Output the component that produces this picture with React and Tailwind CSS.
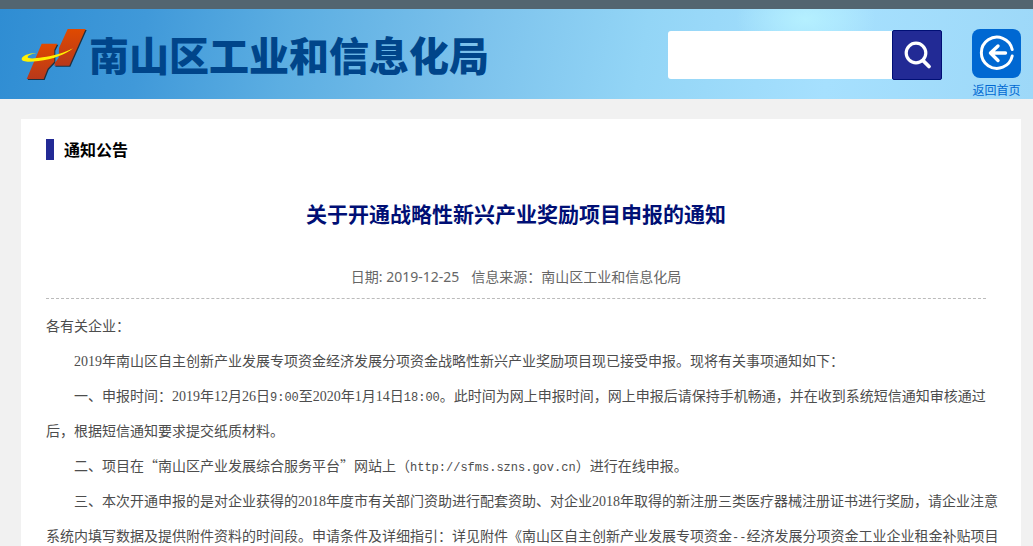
import React from 'react';

const cjk = "font-['Noto_Sans_CJK_SC',sans-serif]";

function Num({ children }) {
  return <span className="leading-none font-['Liberation_Serif',serif]">{children}</span>;
}

function Code({ children }) {
  return <span className="text-[12px] leading-none font-['Liberation_Mono',monospace]">{children}</span>;
}

function Emblem() {
  return (
    <svg className="w-[67px] h-[53px] shrink-0" viewBox="15 24 201 159" aria-hidden="true">
      <defs>
        <linearGradient id="emblemRed" x1="0" y1="0" x2="0" y2="1">
          <stop offset="0" stopColor="#e04a00" />
          <stop offset="1" stopColor="#b8381b" />
        </linearGradient>
      </defs>
      <g fill="#1d3040" transform="translate(3 3)">
        <path d="M80 71H127L118 89V125L98 146L86 177H35Z" />
        <path d="M158 27H212L163 137H118L120 128L131 113L132 84Z" />
      </g>
      <path fill="url(#emblemRed)" d="M80 71H127L118 89V125L98 146L86 177H35Z" />
      <path fill="url(#emblemRed)" d="M158 27H212L163 137H118L120 128L131 113L132 84Z" />
      <path
        fill="#fff200"
        d="M64 99C40 100 21 107 20 117C20 127 46 126 70 123C112 119 154 103 174 85C151 98 113 108 83 112C59 116 38 117 38 111C39 106 50 102 64 99Z"
      />
    </svg>
  );
}

function SearchIcon() {
  return (
    <svg className="w-[30px] h-[30px]" viewBox="0 0 30 30" fill="none" stroke="#fff" strokeLinecap="round" aria-hidden="true">
      <circle cx="14" cy="13" r="9.8" strokeWidth="3.2" />
      <path d="M21 20.5L27 26.5" strokeWidth="3.8" />
    </svg>
  );
}

function BackIcon() {
  return (
    <svg className="w-[49px] h-[49px]" viewBox="0 0 49 49" fill="none" stroke="#fff" strokeLinecap="round" strokeLinejoin="round" aria-hidden="true">
      <path d="M40.2 20.5A15.6 15.6 0 1 0 40.2 27" strokeWidth="3" />
      <path d="M33.5 24H18.5M26 17L18.5 24L26 31.5" strokeWidth="3.4" />
    </svg>
  );
}

function Header() {
  return (
    <header>
      <div className="h-[9px] bg-[#536570]"></div>
      <div className="h-[90px] bg-[radial-gradient(ellipse_70px_40px_at_78%_10px,#b5f0ff,transparent),linear-gradient(100deg,#2f8dd3_0%,#4099d9_14%,#5caee2_28%,#7cc2ec_46%,#93d5f6_62%,#a6e0fe_80%,#9dd8f8_100%)]">
        <div className="flex items-start justify-between pl-[20px] pr-3">
          <a href="#" className="flex items-center gap-[2px] pt-[19px] text-[#00458a]">
            <Emblem />
            <span className="text-[40px] leading-[53px] font-black whitespace-nowrap">南山区工业和信息化局</span>
          </a>

          <div className="flex items-start gap-[30px] pt-[20px]">
            <form className="flex items-center" onSubmit={(e) => e.preventDefault()}>
              <input type="text" aria-label="搜索" className="w-56 h-12 px-3 rounded-l-[3px] bg-white outline-none" />
              <button type="submit" aria-label="搜索" className="flex items-center justify-center w-[50px] h-[50px] mt-px rounded-[2px] border border-[#000f75] bg-[#222a95]">
                <SearchIcon />
              </button>
            </form>
            <a href="#" className="flex flex-col items-center text-[12px] leading-6 text-[#0068d2]">
              <span className="rounded-lg bg-[#0068d2]">
                <BackIcon />
              </span>
              返回首页
            </a>
          </div>
        </div>
      </div>
    </header>
  );
}

function App() {
  return (
    <div className={`h-screen overflow-hidden bg-[#f1f1f1] ${cjk}`}>
      <Header />

      <main className="mt-5 ml-[21px] mr-3 min-h-full bg-white pl-[25px] pt-5">
        <div className="flex items-center gap-[10px]">
          <span className="w-2 h-[21px] bg-[#222a95]"></span>
          <h2 className="text-[16px] leading-[21px] font-bold text-black">通知公告</h2>
        </div>

        <div className="mr-[35px] text-center border-b border-dashed border-[#bbb]">
          <h1 className="pt-[38px] text-[21px] leading-[30px] font-bold text-[#000f75]">关于开通战略性新兴产业奖励项目申报的通知</h1>
          <p className="flex justify-center gap-3 pt-[38px] pb-[10px] text-[14px] leading-[22px] text-[#666] font-['Noto_Sans','Noto_Sans_CJK_SC',sans-serif]">
            <span>日期: 2019-12-25</span>
            <span>信息来源：南山区工业和信息化局</span>
          </p>
        </div>

        <article className="mr-5 pt-[9px] text-[14px] leading-[35px] text-[#4d4d4d]">
          <p>各有关企业：</p>
          <p className="indent-[28px]">
            <Num>2019</Num>年南山区自主创新产业发展专项资金经济发展分项资金战略性新兴产业奖励项目现已接受申报。现将有关事项通知如下：
          </p>
          <p className="indent-[28px]">
            一、申报时间：<Num>2019</Num>年<Num>12</Num>月<Num>26</Num>日<Code>9:00</Code>至<Num>2020</Num>年<Num>1</Num>月<Num>14</Num>日<Code>18:00</Code>。此时间为网上申报时间，网上申报后请保持手机畅通，并在收到系统短信通知审核通过后，根据短信通知要求提交纸质材料。
          </p>
          <p className="indent-[28px]">
            二、项目在“南山区产业发展综合服务平台”网站上（<Code>http://sfms.szns.gov.cn</Code>）进行在线申报。
          </p>
          <p className="indent-[28px]">
            三、本次开通申报的是对企业获得的<Num>2018</Num>年度市有关部门资助进行配套资助、对企业<Num>2018</Num>年取得的新注册三类医疗器械注册证书进行奖励，请企业注意系统内填写数据及提供附件资料的时间段。申请条件及详细指引：详见附件《南山区自主创新产业发展专项资金<Code>--</Code>经济发展分项资金工业企业租金补贴项目
          </p>
        </article>
      </main>
    </div>
  );
}

export default App;
